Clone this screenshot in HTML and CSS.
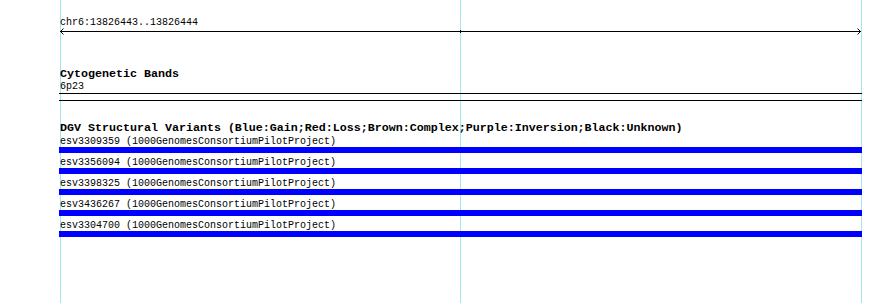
FILE: index.html
```html
<!DOCTYPE html>
<html lang="en">
<head>
    <meta charset="UTF-8">
    <title>chr6:13826443..13826444</title>
    <link rel="stylesheet" href="styles.css">
</head>
<body>

    <div class="panel">
        <!-- grid lines -->
        <div class="grid grid-left"></div>
        <div class="grid grid-mid"></div>
        <div class="grid grid-right"></div>

        <!-- Ruler -->
        <div class="track ruler">
            <div class="label">chr6:13826443..13826444</div>
            <svg class="axis" width="803" height="7" viewBox="0 0 803 7">
                <line x1="1" y1="3.5" x2="802" y2="3.5" stroke="#000" stroke-width="1"/>
                <path d="M4.5 0.5 L1.5 3.5 L4.5 6.5" fill="none" stroke="#000" stroke-width="1"/>
                <path d="M798.5 0.5 L801.5 3.5 L798.5 6.5" fill="none" stroke="#000" stroke-width="1"/>
                <line x1="401.5" y1="2" x2="401.5" y2="5" stroke="#000" stroke-width="1"/>
            </svg>
        </div>

        <!-- Cytogenetic Bands -->
        <div class="track cyto">
            <div class="title">Cytogenetic Bands</div>
            <div class="label">6p23</div>
            <div class="band"></div>
        </div>

        <!-- DGV -->
        <div class="track dgv">
            <div class="title">DGV Structural Variants (Blue:Gain;Red:Loss;Brown:Complex;Purple:Inversion;Black:Unknown)</div>
            <div class="feature">
                <div class="label">esv3309359 (1000GenomesConsortiumPilotProject)</div>
                <div class="bar gain"></div>
            </div>
            <div class="feature">
                <div class="label">esv3356094 (1000GenomesConsortiumPilotProject)</div>
                <div class="bar gain"></div>
            </div>
            <div class="feature">
                <div class="label">esv3398325 (1000GenomesConsortiumPilotProject)</div>
                <div class="bar gain"></div>
            </div>
            <div class="feature">
                <div class="label">esv3436267 (1000GenomesConsortiumPilotProject)</div>
                <div class="bar gain"></div>
            </div>
            <div class="feature">
                <div class="label">esv3304700 (1000GenomesConsortiumPilotProject)</div>
                <div class="bar gain"></div>
            </div>
        </div>
    </div>

</body>
</html>
```

FILE: styles.css
```css
body {
    margin: 0;
    padding: 0;
    background-color: #fff;
    font-family: "Liberation Mono", "DejaVu Sans Mono", monospace;
    color: #000;
}
.panel {
    position: relative;
    width: 890px;
    height: 303px;
    padding-left: 59px;
    box-sizing: border-box;
    overflow: hidden;
}
.grid {
    position: absolute;
    top: 0;
    bottom: 0;
    width: 1px;
    background-color: #9ee9ee;
}
.grid-left {
    left: 60px;
}
.grid-mid {
    left: 460px;
}
.grid-right {
    left: 861px;
}
.track {
    position: relative;
    width: 803px;
}
.label {
    font-size: 10px;
    line-height: 10px;
    height: 10px;
    padding-top: 3px;
    padding-left: 1px;
    white-space: nowrap;
}
.title {
    font-size: 11.67px;
    font-weight: bold;
    line-height: 10px;
    height: 10px;
    padding-top: 3px;
    padding-left: 1px;
    white-space: nowrap;
}
.ruler {
    padding-top: 15px;
}
.axis {
    display: block;
}
.cyto {
    margin-top: 31px;
}
.band {
    height: 6px;
    margin-top: 1px;
    border-top: 1px solid #000;
    border-bottom: 1px solid #000;
}
.dgv {
    margin-top: 19px;
}
.dgv .title {
    margin-bottom: 1px;
}
.feature {
    margin-bottom: 2px;
}
.bar {
    height: 6px;
}
.bar.gain {
    background-color: #0000ff;
}
```
